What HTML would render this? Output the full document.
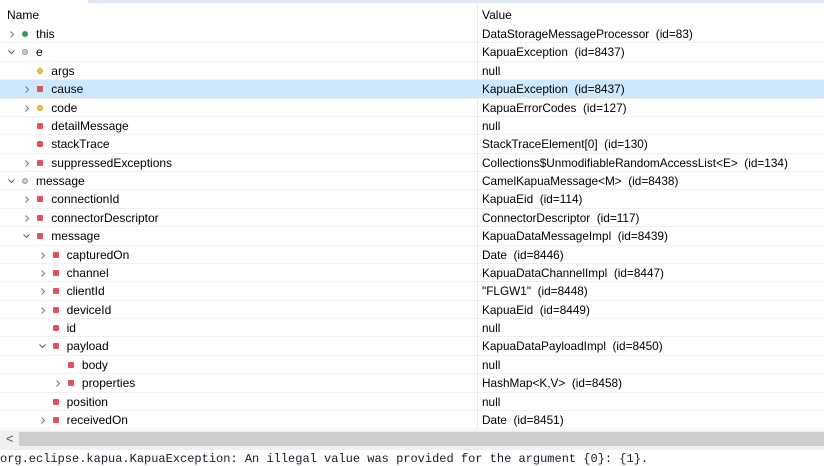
<!DOCTYPE html>
<html><head><meta charset="utf-8"><style>
*{margin:0;padding:0;box-sizing:border-box}
body{width:824px;height:466px;overflow:hidden;background:#fff;font-family:"Liberation Sans",sans-serif;font-size:12px;color:#000;position:relative}
.r{position:absolute;left:0;width:824px;height:18.4px;border-bottom:1px solid #f0f0f0}
.sel{background:#cce8ff}
.t{position:absolute;top:2px;white-space:pre}
.v{position:absolute;left:482px;top:2px;white-space:pre;font-size:11.8px}
.ex{position:absolute;top:5px}
.ic{position:absolute;top:6px;width:6px;height:6px}
.sq{background:#e0515c;border-radius:1px}
.yc{background:#f2c14e;border-radius:50%;border:1px solid #d9a530}
.gc{background:#3a9a4e;border-radius:50%}
.pc{background:#c8c8c8;border-radius:50%;border:1px solid #999}
</style></head><body>
<div style="position:absolute;left:88px;top:0;width:736px;height:3px;background:#dfe8f2"></div>
<div style="position:absolute;left:477px;top:4px;width:1px;height:424px;background:#e8e8e8"></div>
<div class="t" style="left:7px;top:8px">Name</div>
<div class="t" style="left:482px;top:8px">Value</div>
<div id="rows"></div>
<div style="position:absolute;left:0;top:430px;width:824px;height:20px;background:#f0f0f0"></div>
<div style="position:absolute;left:19px;top:432px;width:805px;height:14px;background:#cdcdcd"></div>
<div style="position:absolute;left:6px;top:431px;font-size:13px;color:#555">&lt;</div>
<div style="position:absolute;left:0;top:452px;font-family:'Liberation Mono',monospace;font-size:12px;color:#1a1a2a;white-space:nowrap">org.eclipse.kapua.KapuaException: An illegal value was provided for the argument {0}: {1}.</div>
<script>
var d=[[0,'>','gc','this','DataStorageMessageProcessor  (id=83)'],
[0,'v','pc','e','KapuaException  (id=8437)'],
[1,'','yc','args','null'],
[1,'>','sq','cause','KapuaException  (id=8437)'],
[1,'>','yc','code','KapuaErrorCodes  (id=127)'],
[1,'','sq','detailMessage','null'],
[1,'','sq','stackTrace','StackTraceElement[0]  (id=130)'],
[1,'>','sq','suppressedExceptions','Collections$UnmodifiableRandomAccessList&lt;E&gt;  (id=134)'],
[0,'v','pc','message','CamelKapuaMessage&lt;M&gt;  (id=8438)'],
[1,'>','sq','connectionId','KapuaEid  (id=114)'],
[1,'>','sq','connectorDescriptor','ConnectorDescriptor  (id=117)'],
[1,'v','sq','message','KapuaDataMessageImpl  (id=8439)'],
[2,'>','sq','capturedOn','Date  (id=8446)'],
[2,'>','sq','channel','KapuaDataChannelImpl  (id=8447)'],
[2,'>','sq','clientId','"FLGW1"  (id=8448)'],
[2,'>','sq','deviceId','KapuaEid  (id=8449)'],
[2,'','sq','id','null'],
[2,'v','sq','payload','KapuaDataPayloadImpl  (id=8450)'],
[3,'','sq','body','null'],
[3,'>','sq','properties','HashMap&lt;K,V&gt;  (id=8458)'],
[2,'','sq','position','null'],
[2,'>','sq','receivedOn','Date  (id=8451)']];
var h='';
d.forEach(function(r,i){var top=25+i*18.38;var o=r[0]*15.3;
var ex='';
if(r[1]=='>')ex='<svg class="ex" style="left:'+(8+o)+'px" width="8" height="9"><path d="M2.5 1.5L5.5 4.5L2.5 7.5" fill="none" stroke="#808080" stroke-width="1.1"/></svg>';
if(r[1]=='v')ex='<svg class="ex" style="left:'+(7+o)+'px" width="9" height="9"><path d="M1.5 2.5L4.5 5.5L7.5 2.5" fill="none" stroke="#606060" stroke-width="1.1"/></svg>';
h+='<div class="r'+(i==3?' sel':'')+'" style="top:'+top+'px">'+ex+
'<span class="ic '+r[2]+'" style="left:'+(22+o)+'px"></span>'+
'<span class="t" style="left:'+(36+o)+'px">'+r[3]+'</span><span class="v">'+r[4]+'</span></div>';});
document.getElementById('rows').innerHTML=h;
</script>
</body></html>
